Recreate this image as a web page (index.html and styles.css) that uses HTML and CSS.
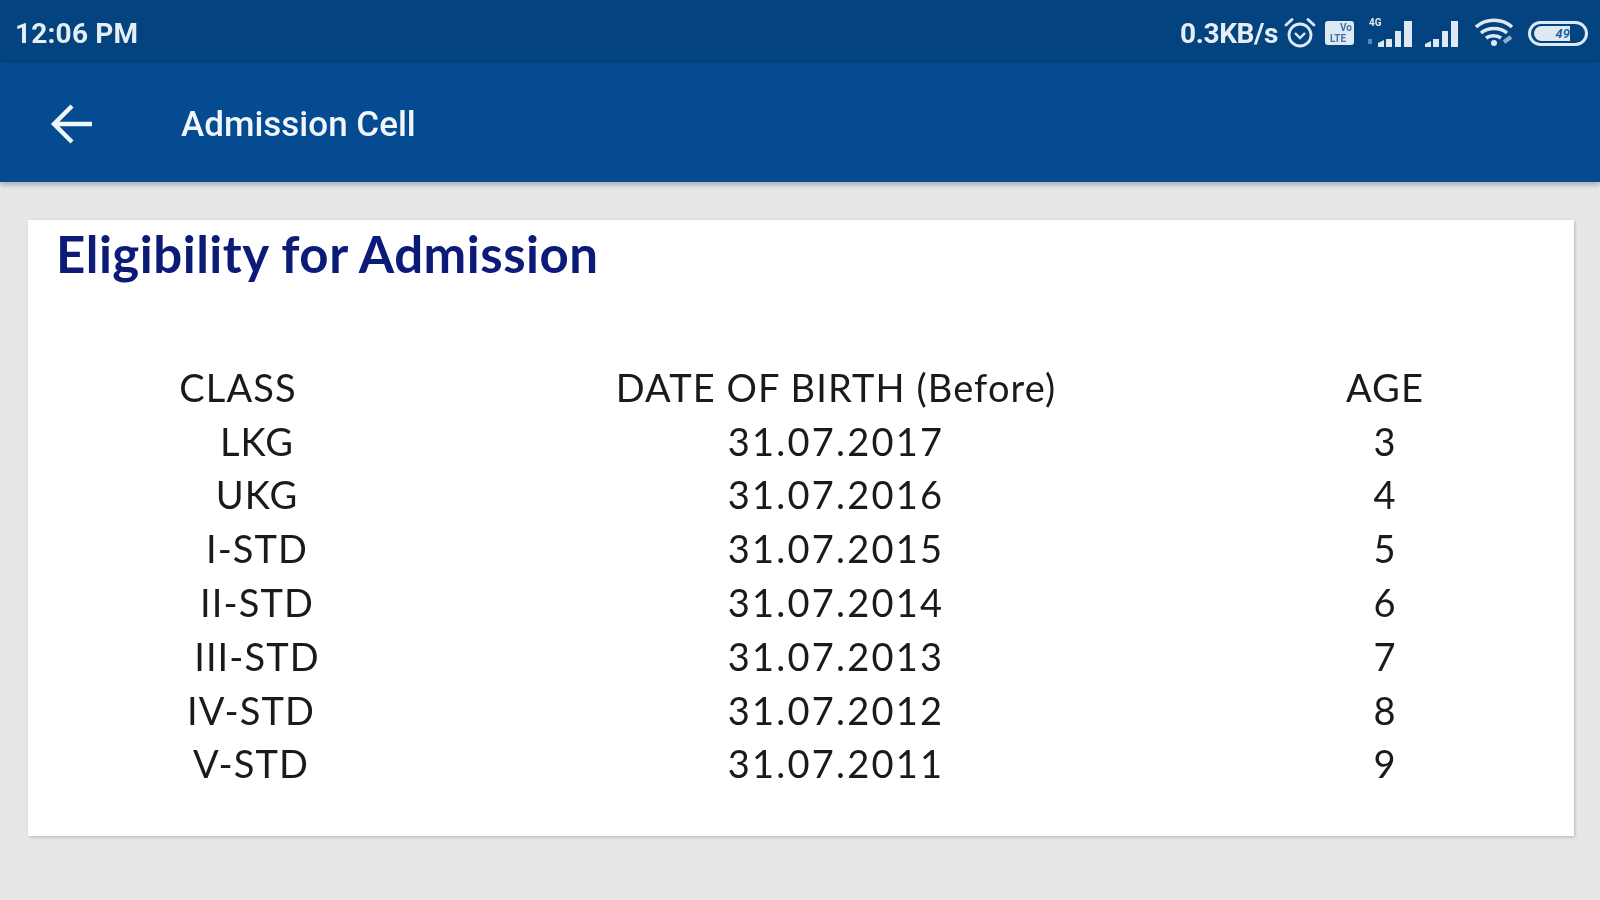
FILE: index.html
```html
<!doctype html>
<html lang="en">
<head>
	<meta charset="UTF-8">
	<title>Admission Cell</title>
	<link rel="stylesheet" href="styles.css">
</head>
<body>
	<div class="status">
		<span class="time">12:06 PM</span>
		<div class="status-right">
			<span class="speed">0.3KB/s</span>
			<svg class="ic-alarm" width="32" height="32" viewBox="0 0 32 32" fill="none" stroke="#dfe9f3" stroke-width="2.8">
				<circle cx="16" cy="18" r="11"/>
				<path d="M11 16l5 5 5-5" stroke-width="2.4"/>
				<path d="M2 8l6-5.500M30 8l-6-5.500" stroke-linecap="round"/>
			</svg>
			<svg class="ic-volte" width="29" height="24" viewBox="0 0 29 24">
				<rect width="29" height="24" rx="3" fill="#dfe9f3"/>
				<text class="ic-label" x="15" y="10" fill="#3f72a6">Vo</text>
				<text class="ic-label" x="5" y="21" fill="#3f72a6">LTE</text>
			</svg>
			<svg class="ic-sig4g" width="48" height="32" viewBox="0 0 48 32" fill="#dfe9f3">
				<text class="ic-label" x="1" y="9">4G</text>
				<path d="M0 22h4v5H0z" opacity=".4"/>
				<path d="M10 26l6-3v7h-6zM18 22h6v8h-6zM27 14h6v16h-6zM36 4h8v26h-8z"/>
			</svg>
			<svg class="ic-sig" width="36" height="32" viewBox="0 0 36 32" fill="#dfe9f3">
				<path d="M0 27l6-3v6H0zM8 22h6v8H8zM17 14h6v16h-6zM26 4h7v26h-7z"/>
			</svg>
			<svg class="ic-wifi" width="40" height="30" viewBox="0 0 40 30" fill="none" stroke="#dfe9f3" stroke-width="3.6">
				<path d="M1 9c10-9 26-9 36 0M6 15c7-6 19-6 26 0M11 20c4-3 11-3 15 0"/>
				<circle cx="19" cy="25" r="3" fill="#dfe9f3" stroke="none"/>
				<path d="M29 24l7-5" stroke="#8fb0cf" stroke-width="4"/>
			</svg>
			<div class="battery"><span class="battery-fill">49</span></div>
		</div>
	</div>
	<div class="appbar">
		<svg class="back" width="44" height="40" viewBox="0 0 44 40" fill="none" stroke="#f2f6fa" stroke-width="4.400">
			<path d="M42 20H4M22 2L4 20l18 18"/>
		</svg>
		<span class="appbar-title">Admission Cell</span>
	</div>
	<div class="content">
		<div class="card">
			<h1 class="card-title">Eligibility for Admission</h1>
			<div class="table">
				<div class="shift-head">CLASS</div><div>DATE OF BIRTH (Before)</div><div>AGE</div>
				<div>LKG</div><div class="date">31.07.2017</div><div>3</div>
				<div>UKG</div><div class="date">31.07.2016</div><div>4</div>
				<div>I-STD</div><div class="date">31.07.2015</div><div>5</div>
				<div>II-STD</div><div class="date">31.07.2014</div><div>6</div>
				<div>III-STD</div><div class="date">31.07.2013</div><div>7</div>
				<div class="shift-row">IV-STD</div><div class="date">31.07.2012</div><div>8</div>
				<div class="shift-row">V-STD</div><div class="date">31.07.2011</div><div>9</div>
			</div>
		</div>
	</div>
</body>
</html>
```
FILE: styles.css
```css
*{margin: 0;padding: 0;box-sizing: border-box;}
html,body{width: 1600px;height: 900px;overflow: hidden;}
body{background: #e7e7e7;font-family: "Lato", "Liberation Sans", sans-serif;}

.status{height: 63px;background: #03437f;display: flex;align-items: center;justify-content: space-between;padding: 3px 12px 0 15px;color: #e6eef5;font-family: "Roboto", sans-serif;font-weight: 700;font-size: 28px;filter: blur(.6px);}
.time{letter-spacing: .2px;}
.status-right{display: flex;align-items: center;}
.speed{margin-right: 6px;letter-spacing: -.4px;}
.ic-alarm{margin-right: 9px;}
.ic-volte{margin-right: 14px;}
.ic-sig4g{margin-right: 9px;}
.ic-sig{margin-right: 14px;}
.ic-wifi{margin-right: 13px;}
.ic-label{font-size: 10px;font-weight: 700;}
.battery{width: 60px;height: 25px;border: 3px solid #dfe9f3;border-radius: 13px;padding: 2px 3px;display: flex;}
.battery-fill{width: 36px;background: #dfe9f3;border-radius: 8px 0 0 8px;color: #1f5f9c;font-size: 13px;font-style: italic;line-height: 15px;text-align: right;}

.appbar{height: 119px;background: #044b91;display: flex;align-items: center;padding: 3px 0 0 50px;box-shadow: 0 3px 5px rgba(0,0,0,.25);position: relative;color: #f2f6fa;font-family: "Roboto", sans-serif;font-weight: 500;font-size: 35px;}
.back{margin-right: 87px;filter: blur(.6px);}
.appbar-title{filter: blur(.6px);}

.content{padding: 38px 26px 0 28px;}
.card{height: 616px;background: #fff;box-shadow: 1px 1px 3px rgba(0,0,0,.22);padding: 0 0 0 72px;}
.card-title{margin-left: -44px;padding-top: 4px;font-size: 51px;line-height: 60px;font-weight: 700;letter-spacing: .5px;color: #0c1a78;filter: blur(.6px);}

.table{margin-top: 76px;display: grid;grid-template-columns: 314px 844px 254px;grid-auto-rows: 53.8px;align-items: center;text-align: center;font-size: 38px;letter-spacing: 1.1px;color: #1a1a1a;filter: blur(.6px);}
.date{letter-spacing: 2.2px;}
.shift-head{padding-right: 38px;}
.shift-row{padding-right: 12px;}
```
